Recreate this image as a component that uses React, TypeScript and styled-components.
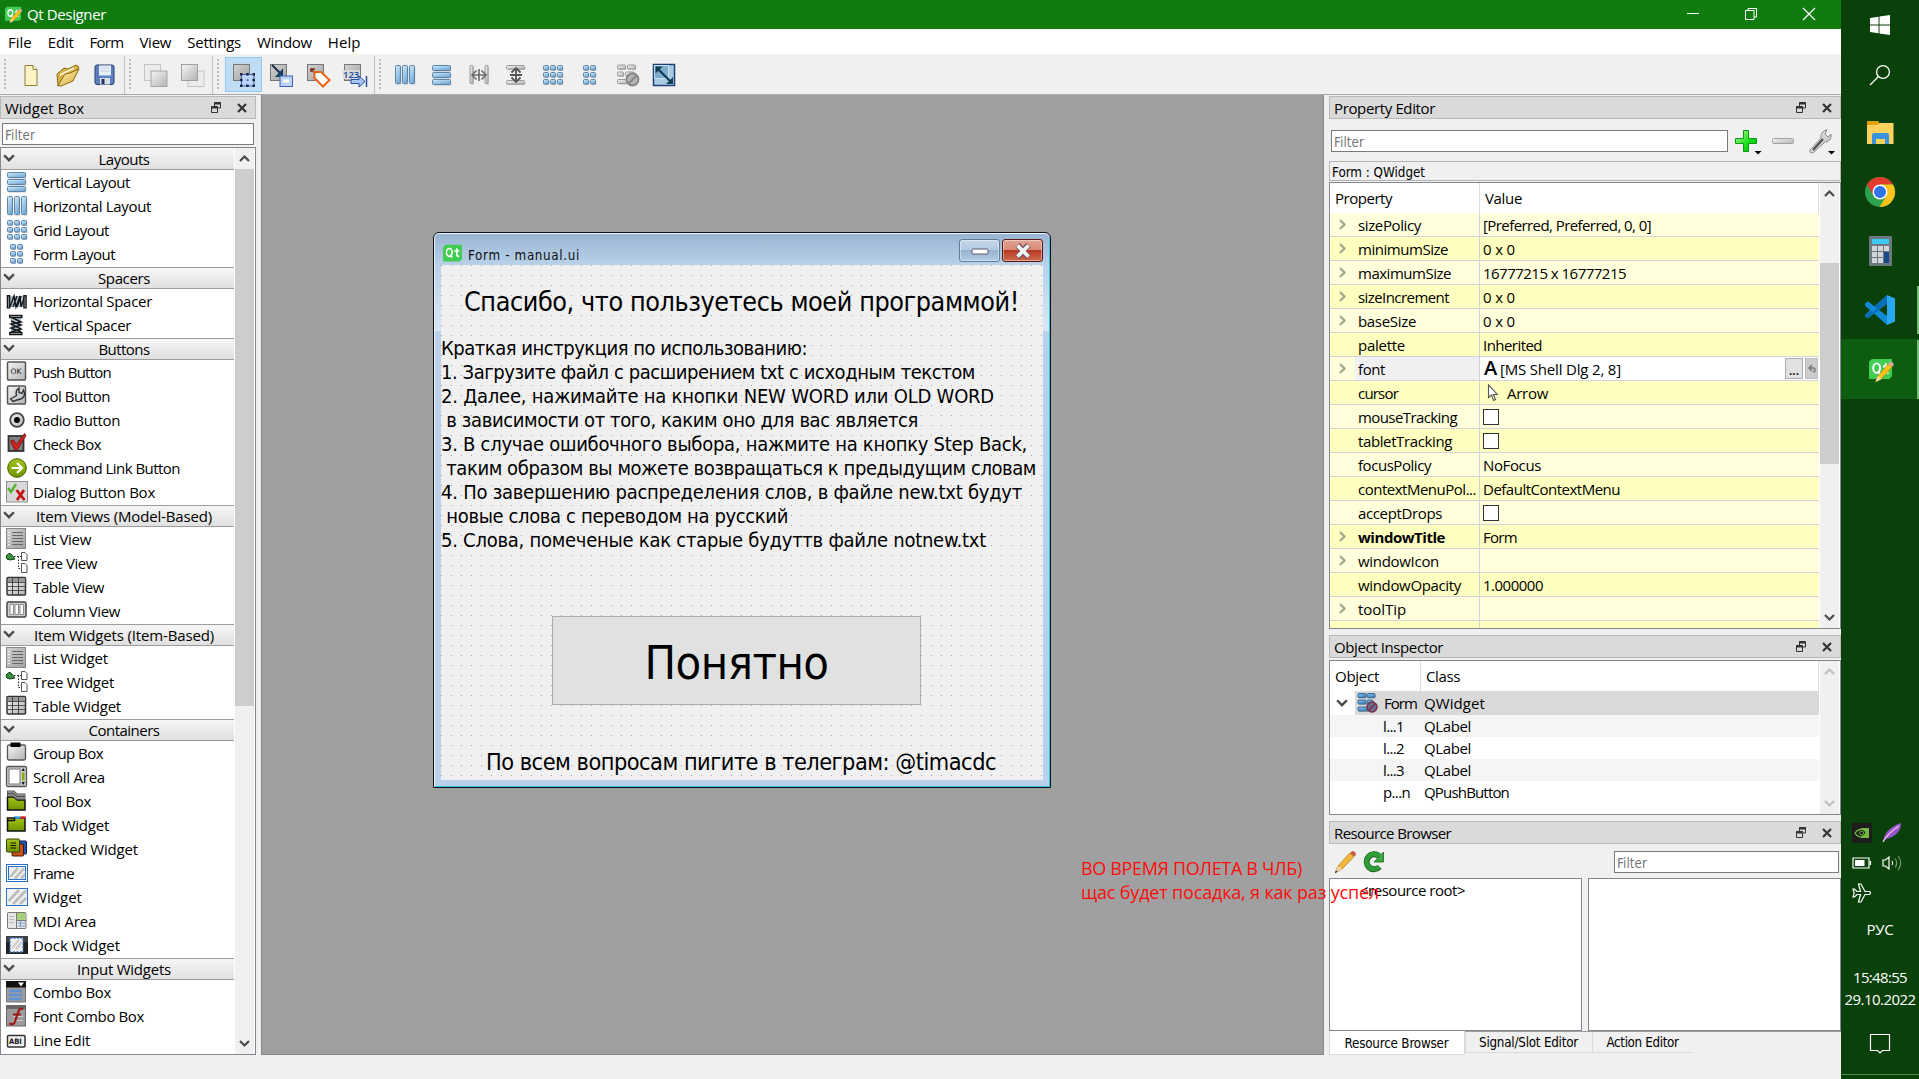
import React, { useLayoutEffect, useRef, useState } from 'react';
import styled, { createGlobalStyle, css } from 'styled-components';

const UI = `"Open Sans", "Noto Sans", sans-serif`;
const TAHOMA = `"DejaVu Sans Condensed", "DejaVu Sans", sans-serif`;

const Global = createGlobalStyle`
  * { box-sizing: border-box; }
  body { margin: 0; background: #f0f0f0; overflow: hidden; }
  svg { display: block; flex: none; overflow: visible; }
`;

/* ---------- text that keeps a given advance width ---------- */
const FitSpan = styled.span`
  display: inline-block;
  white-space: pre;
  flex: none;
`;

function Fit({ w, children }: { w: number; children: string }) {
  const ref = useRef<HTMLSpanElement>(null);
  const [spacing, setSpacing] = useState(0);
  useLayoutEffect(() => {
    if (ref.current) {
      const natural = ref.current.getBoundingClientRect().width;
      setSpacing((w - natural) / Math.max(1, children.length));
    }
  }, [w, children]);
  return <FitSpan ref={ref} style={{ letterSpacing: `${spacing}px` }}>{children}</FitSpan>;
}

/* ---------- shell ---------- */
const Screen = styled.div`
  display: flex;
  width: 1919px;
  height: 1079px;
  font: 15px/20px ${UI};
  color: #000;
  background: #f0f0f0;
`;
const AppWindow = styled.div`
  display: flex;
  flex-direction: column;
  width: 1841px;
`;
const TitleBar = styled.div`
  display: flex;
  align-items: center;
  height: 29px;
  padding: 0 0 1px 5px;
  gap: 6px;
  color: #fff;
  background: #107c10;
`;
const Spacer = styled.div`flex: 1;`;
const WinControls = styled.div`
  display: flex;
  gap: 46px;
  padding-right: 26px;
`;
const MenuBar = styled.div`
  display: flex;
  height: 27px;
  gap: 16px;
  padding: 3px 0 0 8px;
  background: #fff;
  border-bottom: 2px solid #f3f3f3;
`;
const Toolbar = styled.div`
  display: flex;
  height: 39px;
  border-bottom: 1px solid #a9a9ab;
  background: #f0f0f0;
`;
const ToolHandle = styled.div<{ $w: number; $dot: number; $line?: number }>`
  width: ${p => p.$w}px;
  height: 38px;
  background:
    linear-gradient(#c2c2c2, #c2c2c2) ${p => p.$line ?? -5}px 0 / 1px 38px no-repeat,
    repeating-linear-gradient(#bcbcbc 0 2px, transparent 2px 4px) ${p => p.$dot}px 3px / 2px 31px no-repeat;
`;
const ToolButton = styled.div<{ $on?: boolean }>`
  display: flex;
  align-items: center;
  justify-content: center;
  width: 37px;
  height: 35px;
  margin-top: 1px;
  ${p => p.$on && css`background: #c0dcf3; border: 1px solid #90c8f6;`}
`;
const Body = styled.div`
  display: flex;
  height: 960px;
`;
const LeftDock = styled.div`
  display: flex;
  flex-direction: column;
  width: 256px;
  padding-top: 1px;
  margin-right: 5px;
`;
const RightDock = styled.div`
  display: flex;
  flex-direction: column;
  width: 512px;
  padding-top: 1px;
  margin-left: 5px;
`;
const DockTitle = styled.div<{ $mt?: number }>`
  display: flex;
  align-items: center;
  height: 23px;
  flex: none;
  margin-top: ${p => p.$mt ?? 0}px;
  padding: 0 8px 0 4px;
  gap: 16px;
  background: #dadada;
  border: 1px solid #b9b9b9;
`;
const DockName = styled.div`padding-top: 1px;`;
const FilterWrap = styled.div`padding: 4px 0 0 2px;`;
const Input = styled.div<{ $w: number }>`
  display: flex;
  align-items: center;
  width: ${p => p.$w}px;
  height: 22px;
  padding: 3px 0 0 2px;
  font: 13.3px/16px ${TAHOMA};
  color: #777;
  background: #fff;
  border: 1px solid #7a7a7a;
`;
const ListFrame = styled.div`
  display: flex;
  height: 908px;
  margin-top: 2px;
  background: #fff;
  border: 1px solid #828790;
`;
const ListColumn = styled.div`
  width: 234px;
  padding-right: 1px;
`;
const Category = styled.div`
  display: flex;
  align-items: center;
  height: 22px;
  margin-bottom: 1px;
  padding: 0 0 2px 2px;
  background: linear-gradient(#f6f6f6, #e0e0e0);
  border: solid #9c9c9c;
  border-width: 1px 0;
  &:first-child { border-top-color: #f6f6f6; }
`;
const CategoryName = styled.div`
  display: flex;
  flex: 1;
  justify-content: center;
  padding: 2px 1px 0 0;
`;
const WidgetRow = styled.div`
  display: flex;
  align-items: center;
  height: 24px;
  padding: 0 0 2px 4px;
  gap: 5px;
`;
const ScrollTrack = styled.div`
  display: flex;
  flex-direction: column;
  align-items: center;
  width: 19px;
  background: #f0f0f0;
`;
const ScrollCap = styled.div<{ $h: number }>`
  display: flex;
  align-items: center;
  height: ${p => p.$h}px;
`;
const Thumb = styled.div<{ $mt?: number; $h: number }>`
  width: 100%;
  height: ${p => p.$h}px;
  margin-top: ${p => p.$mt ?? 0}px;
  background: #cdcdcd;
`;
const Canvas = styled.div`
  position: relative;
  width: 1063px;
  background: #a0a0a0;
  border: 1px solid #828790;
  border-top: 0;
`;

/* ---------- designed form ---------- */
const FormWindow = styled.div`
  position: absolute;
  left: 171px;
  top: 137px;
  width: 618px;
  height: 556px;
  display: flex;
  flex-direction: column;
  padding: 0 6px 7px;
  border: 1px solid #111;
  border-radius: 6px 6px 0 0;
  box-shadow: inset 0 1px #eef4fb, inset 1px 0 #e6eff9, inset -1px -1px #2cc6e6;
  background:
    linear-gradient(#99b4d1, #b9d1ea) 0 0 / 100% 32px no-repeat,
    linear-gradient(#b9d1ea, #d9e6f5) 0 32px / 100% 66px no-repeat,
    #b9d1ea;
`;
const FormTitle = styled.div`
  display: flex;
  height: 32px;
  flex: none;
  padding: 6px 1px 0 3px;
  font: 13.3px/16px ${TAHOMA};
  color: #111;
`;
const FormIcon = styled.div`padding-top: 5px;`;
const FormCaption = styled.div`padding: 9px 0 0 6px;`;
const CaptionButton = styled.div<{ $close?: boolean }>`
  display: flex;
  align-items: center;
  justify-content: center;
  width: 41px;
  height: 23px;
  margin-left: 2px;
  border-radius: 3px;
  border: 1px solid ${p => (p.$close ? '#5a1a17' : '#5f7c9b')};
  box-shadow: inset 0 0 0 1px rgba(255, 255, 255, .4);
  background: ${p => p.$close
    ? 'linear-gradient(#e3a193, #d98a78 48%, #b93a20 50%, #cd6b50)'
    : 'linear-gradient(#c3d5e8, #b4cae1 48%, #97b2cf 50%, #b3cce6)'};
`;
const FormBody = styled.div`
  display: flex;
  flex-direction: column;
  width: 602px;
  height: 516px;
  margin-left: 1px;
  font-family: ${TAHOMA};
  background: radial-gradient(circle at .5px .5px, #a3a3a3 .6px, transparent .7px) 0 0 / 10px 10px, #f0f0f0;
`;
const Heading = styled.div`
  padding: 21px 0 0 23px;
  font-size: 26.7px;
  line-height: 32px;
`;
const Manual = styled.div`
  padding-top: 18px;
  font-size: 20px;
  line-height: 24px;
`;
const ManualLine = styled.div`height: 24px;`;
const PushButton = styled.div`
  display: flex;
  align-items: center;
  justify-content: center;
  width: 369px;
  height: 89px;
  margin: 64px 0 0 111px;
  padding-top: 4px;
  font-size: 46.7px;
  line-height: 56px;
  background: #e1e1e1;
  border: 1px solid #adadad;
`;
const Footer = styled.div`
  padding: 43px 0 0 45px;
  font-size: 23.3px;
  line-height: 28px;
`;
const Note = styled.div`
  position: absolute;
  left: 819px;
  top: 761px;
  z-index: 2;
  font: 18px/24px ${UI};
  color: #ff0c0c;
`;

/* ---------- right docks ---------- */
const FilterBar = styled.div`
  display: flex;
  align-items: flex-start;
  height: 42px;
  padding: 11px 0 0 2px;
`;
const ToolIcon = styled.div<{ $ml: number }>`margin-left: ${p => p.$ml}px;`;
const ObjectName = styled.div`
  height: 20px;
  padding: 2px 0 0 2px;
  font: 13.3px/17px ${TAHOMA};
  border: 1px solid #b5b5b5;
`;
const Frame = styled.div<{ $h: number; $mt: number }>`
  display: flex;
  flex: none;
  height: ${p => p.$h}px;
  margin-top: ${p => p.$mt}px;
  background: #fff;
  border: 1px solid #828790;
`;
const Tree = styled.div`
  width: 490px;
  overflow: hidden;
`;
const TreeHead = styled.div<{ $first: number }>`
  display: grid;
  grid-template-columns: ${p => p.$first}px 1fr;
  height: 30px;
  margin-right: 1px;
  border-right: 1px solid #e0e0e0;
`;
const HeadCell = styled.div`
  padding: 5px 5px 0;
  & + & { border-left: 1px solid #dedede; }
`;
const PropRow = styled.div<{ $dark: boolean }>`
  display: grid;
  grid-template-columns: 25px 124px 1fr;
  height: 24px;
  margin-right: 1px;
  background: ${p => (p.$dark ? '#ffffbf' : '#ffffdc')};
`;
const PropCell = styled.div<{ $kind?: 'name' | 'value'; $bg?: string; $bold?: boolean }>`
  display: flex;
  align-items: center;
  padding-left: ${p => (p.$kind ? 3 : 7)}px;
  padding-top: ${p => (p.$kind ? 1 : 0)}px;
  border-bottom: 1px solid #d3d3dc;
  ${p => p.$kind === 'value' && css`border-left: 1px solid #d3d3dc;`}
  ${p => p.$bg && css`background: ${p.$bg};`}
  ${p => p.$bold && css`font-weight: 700;`}
`;
const CheckBox = styled.div`
  width: 16px;
  height: 16px;
  background: #fff;
  border: 1px solid #333;
`;
const MiniButton = styled.div<{ $w: number; $dim?: boolean }>`
  display: flex;
  align-items: center;
  justify-content: center;
  width: ${p => p.$w}px;
  height: 21px;
  margin: -1px 1px 0;
  padding-top: ${p => (p.$dim ? 0 : 4)}px;
  font: 600 12px/12px ${UI};
  border: 1px solid ${p => (p.$dim ? '#bdbdbd' : '#adadad')};
  background: ${p => (p.$dim ? '#cccccc' : '#e1e1e1')};
`;
const FontValue = styled.div`
  display: flex;
  align-items: center;
  gap: 3px;
`;
const BigA = styled.span`
  font: 600 20px/20px ${UI};
  margin-left: 1px;
  padding-bottom: 2px;
  width: 13px;
`;
const ObjRow = styled.div<{ $bg: string; $h: number }>`
  display: grid;
  grid-template-columns: 25px 66px 1fr;
  align-items: center;
  height: ${p => p.$h}px;
  margin-right: 1px;
  background: linear-gradient(${p => p.$bg}, ${p => p.$bg}) ${p => (p.$h === 24 ? 25 : 0)}px 0 no-repeat;
`;
const ObjName = styled.div<{ $pl: number }>`
  display: flex;
  align-items: center;
  gap: 6px;
  padding-left: ${p => p.$pl}px;
`;
const ObjClass = styled.div`padding-left: 3px;`;
const ResourceBar = styled.div`
  display: flex;
  height: 34px;
  padding: 7px 2px 0 5px;
  gap: 7px;
`;
const ResourcePanes = styled.div`
  display: grid;
  grid-template-columns: 253px 253px;
  gap: 6px;
  height: 153px;
`;
const Pane = styled.div`
  padding: 1px 0 0 30px;
  background: #fff;
  border: 1px solid #828790;
`;
const Tabs = styled.div`
  display: flex;
  align-items: flex-start;
  height: 24px;
  font: 13.3px/16px ${TAHOMA};
  border-top: 1px solid #a0a0a4;
`;
const Tab = styled.div<{ $w: number; $active?: boolean }>`
  display: flex;
  justify-content: center;
  width: ${p => p.$w}px;
  height: ${p => (p.$active ? 24 : 21)}px;
  padding-top: ${p => (p.$active ? 5 : 3)}px;
  padding-right: 1px;
  margin-top: ${p => (p.$active ? -1 : 0)}px;
  background: ${p => (p.$active ? '#fff' : '#f0f0f0')};
  border: solid #d9d9d9;
  border-width: 0 ${p => (p.$active ? 1 : 0)}px 1px 1px;
`;

/* ---------- taskbar ---------- */
const Taskbar = styled.div`
  display: flex;
  flex-direction: column;
  align-items: center;
  width: 78px;
  height: 1079px;
  color: #fff;
  background: #0a410a;
`;
const Slot = styled.div<{ $h: number; $active?: boolean; $open?: boolean; $mt?: number }>`
  display: flex;
  align-items: center;
  justify-content: center;
  width: 78px;
  height: ${p => p.$h}px;
  margin-top: ${p => p.$mt ?? 0}px;
  flex: none;
  background:
    linear-gradient(#76b876, #76b876) right center / ${p => (p.$open ? 2 : 0)}px ${p => (p.$active ? 59 : 48)}px no-repeat,
    ${p => (p.$active ? '#0d5c10' : 'transparent')};
`;
const Tray = styled.div`
  display: grid;
  grid-template-columns: 20px 20px;
  grid-auto-rows: 20px;
  gap: 10px;
  align-items: center;
  justify-items: center;
  width: 56px;
  margin-top: 424px;
`;
const TrayText = styled.div<{ $mt: number }>`
  margin-top: ${p => p.$mt}px;
  line-height: 20px;
`;
const TaskEnd = styled.div`
  width: 78px;
  height: 5px;
  margin-top: auto;
  border-top: 1px solid #4f8a4f;
`;

/* ---------- drawings ---------- */
const Chevron = ({ d, c = '#4a4a4a', s = 11 }: { d: 'up' | 'down' | 'right'; c?: string; s?: number }) => (
  <svg width={s} height={s} viewBox="0 0 11 11" fill="none" stroke={c} strokeWidth="2.2">
    <path d={d === 'up' ? 'M1 8 L5.5 3.5 L10 8' : d === 'down' ? 'M1 3 L5.5 7.5 L10 3' : 'M3 1 L7.5 5.5 L3 10'} />
  </svg>
);
const FloatIcon = () => (
  <svg width="10" height="11" viewBox="0 0 10 11" fill="none" stroke="#333" strokeWidth="1">
    <path d="M3.5 4V.5h6v5.5H7" /><path d="M3 1.5h7M0 5.5h7" strokeWidth="2" /><path d="M.5 4.5h6v6h-6z" />
  </svg>
);
const CloseIcon = () => (
  <svg width="10" height="10" viewBox="0 0 10 10" stroke="#333" strokeWidth="2.2"><path d="M1 1l8 8M9 1l-8 8" /></svg>
);
const QtIcon = ({ s = 16, pencil = false }: { s?: number; pencil?: boolean }) => (
  <svg width={s} height={s} viewBox="0 0 24 24">
    <path d="M3 1h21v18l-3 3H0V4z" fill="#41cd52" />
    <g fill="none" stroke="#fff" strokeWidth="2"><ellipse cx="8" cy="10.6" rx="3.6" ry="5" /><path d="M9 13.5l2.5 3.6M17.5 5.5v8q0 2.4 3 2M14.5 8.8h6" /></g>
    {pencil && <g><path d="M7 25l2-6L20 6l4 3.5L13 22z" fill="#f6c21c" stroke="#b07b10" strokeWidth=".6" /><path d="M20 6l2-2q3-.5 4 3l-2 2.5z" fill="#dda7a0" /><path d="M7 25l2-6 4 3z" fill="#f2dcb5" /></g>}
  </svg>
);

const I = ({ children, w = 24, h = 24 }: { children: React.ReactNode; w?: number; h?: number }) => (
  <svg width={w} height={h} viewBox={`0 0 ${w} ${h}`}>{children}</svg>
);
const DefsSvg = styled.svg`position: absolute;`;
const Gradients = () => (
  <DefsSvg width="0" height="0">
    <defs>
      <linearGradient id="blue" x2=".6" y2="1"><stop stopColor="#d2edfb" /><stop offset="1" stopColor="#74abd8" /></linearGradient>
      <linearGradient id="deep" x2=".6" y2="1"><stop stopColor="#8ac6ee" /><stop offset="1" stopColor="#3f83bd" /></linearGradient>
      <linearGradient id="gray" x2="1" y2="1"><stop stopColor="#f4f4f4" /><stop offset="1" stopColor="#b4b4b4" /></linearGradient>
      <linearGradient id="mid" x2="1" y2="1"><stop stopColor="#d2d2d2" /><stop offset="1" stopColor="#a2a2a2" /></linearGradient>
      <linearGradient id="green" x2="0" y2="1"><stop stopColor="#a3c414" /><stop offset="1" stopColor="#6f9400" /></linearGradient>
      <linearGradient id="gold" x2="1" y2="1"><stop stopColor="#fdf3c0" /><stop offset="1" stopColor="#d9a92e" /></linearGradient>
      <linearGradient id="plus" x2="1" y2="1"><stop stopColor="#b6f7a0" /><stop offset=".6" stopColor="#14dd14" /><stop offset="1" stopColor="#0bb00b" /></linearGradient>
    </defs>
  </DefsSvg>
);
type Cell = [number, number, number, number];
const tones = {
  blue: ['url(#blue)', '#5f84aa'],
  deep: ['url(#deep)', '#3a6a94'],
  gray: ['url(#gray)', '#9a9a9a'],
} as const;
const Cellset = ({ cells, tone = 'blue' }: { cells: Cell[]; tone?: keyof typeof tones }) => (
  <g>
    {cells.map(([x, y, w, h], i) => <rect key={`s${i}`} x={x + .7} y={y + .9} width={w} height={h} rx="1" fill="#8d949c" opacity=".55" />)}
    <g fill={tones[tone][0]} stroke={tones[tone][1]} strokeWidth="1">
      {cells.map(([x, y, w, h], i) => <rect key={i} x={x} y={y} width={w} height={h} rx="1" />)}
    </g>
  </g>
);
const vCells: Cell[] = [[2.5, 2.5, 18, 5], [2.5, 9.5, 18, 5], [2.5, 16.5, 18, 5]];
const hCells: Cell[] = [[2.5, 2.5, 5, 18], [9.5, 2.5, 5, 18], [16.5, 2.5, 5, 18]];
const gCells: Cell[] = [0, 1, 2].flatMap(r => [0, 1, 2].map(c => [2.5 + c * 7, 2.5 + r * 7, 5, 4.5] as Cell));
const fCells: Cell[] = [0, 1, 2].flatMap(r => [0, 1].map(c => [5.5 + c * 7, 2.5 + r * 7, 5, 4.5] as Cell));
const SheetBack = () => <rect x="1.5" y="1.5" width="16" height="16" fill="url(#mid)" stroke="#777" />;
const brokenCells: Cell[] = [[2.5, 2, 8, 4], [12.5, 2, 8, 4], [2.5, 9, 6, 4], [10.5, 9, 9, 4], [2.5, 16.5, 9, 4]];
const formCells: Cell[] = [[2, 1.5, 8, 4], [11, 1.5, 8, 4], [2, 8, 8, 4], [11, 8, 6, 4], [2, 15, 11, 4]];
const handles: [number, number][] = [[8, 10], [14.2, 10], [20.5, 10], [8, 15.8], [20.5, 15.8], [8, 21.5], [14.2, 21.5], [20.5, 21.5]];

const toolIcons: Record<string, React.ReactNode> = {
  new: <><path d="M6 2.5h8l4 4v16H6z" fill="#fcf4c4" stroke="#8f7d33" /><path d="M14 2.5v4h4" fill="#fffbe6" stroke="#8f7d33" /></>,
  open: <><path d="M1 11L8 5l4 1 8-4 3 2-7 13-14 6z" fill="#d9b145" stroke="#8a6a17" /><path d="M2 22.5L9 11l5-1 9-4-6 12-12 5z" fill="url(#gold)" stroke="#8a6a17" /><path d="M4 12l14-7" stroke="#fff8dc" strokeWidth="1.5" /></>,
  save: <><rect x="2" y="2" width="19" height="19.5" rx="2" fill="#5c7fc0" stroke="#26406f" /><rect x="6" y="2.5" width="12" height="10" fill="#e9eff8" /><path d="M7 8h10M7 5h10" stroke="#c3cfe2" /><rect x="7" y="15" width="10" height="6.5" fill="#dadfe8" /><rect x="8.5" y="16" width="3" height="5" fill="#23355a" /></>,
  back: <><rect x="1.5" y="1.5" width="16" height="16" fill="#ececec" stroke="#c4c4c4" /><rect x="8" y="8" width="16" height="15.5" fill="url(#gray)" stroke="#a6a6a6" /></>,
  front: <><rect x="8" y="8" width="16" height="15.5" fill="#ececec" stroke="#c4c4c4" /><rect x="1.5" y="1.5" width="16" height="16" fill="url(#gray)" stroke="#a0a0a0" /></>,
  edit: <><SheetBack /><rect x="9.5" y="11.5" width="12.5" height="11.5" fill="#bcd4f8" stroke="#3d64b8" /><g fill="#1c2640">{handles.map(([x, y]) => <rect key={`${x}-${y}`} x={x} y={y} width="2.5" height="2.5" />)}</g><rect x="14.8" y="16.2" width="1.8" height="1.8" fill="#3d64b8" /></>,
  signal: <><SheetBack /><path d="M3 2l9 9" stroke="#163050" strokeWidth="2" /><path d="M14 5.5V14H6z" fill="#163f63" /><rect x="11" y="13" width="12.5" height="10.5" fill="#bdd3f6" stroke="#3d64b8" /><path d="M14 18h6" stroke="#fff" strokeWidth="3" /></>,
  buddy: <><SheetBack /><path d="M5 6l7 7M5 9V6h4" stroke="#7c2713" fill="none" strokeWidth="1.5" /><path d="M8.5 9h6.5l8.500 8-6.500 6.500-8.500-8.500z" fill="#fff" stroke="#ea6517" strokeWidth="2" /></>,
  taborder: <><SheetBack /><rect x="0" y="7" width="17" height="9" fill="#d8d8d8" /><path d="M8 16.5h8V13l6 5.5-6 5.5v-3.500H8z" fill="#a8c4f0" stroke="#244f9c" /><path d="M23.5 13v11" stroke="#244f9c" strokeWidth="1.5" /></>,
  hbox: <Cellset cells={hCells} />,
  vbox: <Cellset cells={vCells} />,
  hsplit: <><Cellset tone="gray" cells={[[3, 2.5, 3, 18], [18, 2.5, 3, 18]]} /><path d="M5 12h14M9.5 7.5L5 12l4.5 4.5M14.5 7.5L19 12l-4.5 4.5M12 6v12" fill="none" stroke="#6f6f6f" strokeWidth="1.7" /></>,
  vsplit: <><Cellset tone="gray" cells={[[2.5, 2.5, 18, 3.5], [2.5, 17.5, 18, 3.5]]} /><path d="M12 5v14M7.5 9.5L12 5l4.5 4.5M7.5 14.5L12 19l4.5-4.5M6 12h12" fill="none" stroke="#555" strokeWidth="1.8" /></>,
  grid: <Cellset cells={gCells} />,
  form: <Cellset cells={fCells} />,
  broken: <><Cellset tone="gray" cells={brokenCells} /><circle cx="17.5" cy="16.5" r="6" fill="#b5b5b5" stroke="#858585" strokeWidth="1.8" /><path d="M14 20l7-7" stroke="#858585" strokeWidth="2" /></>,
  adjust: <><rect x="1.5" y="1.5" width="21" height="21" fill="#a9cbe2" stroke="#1e3f7c" strokeWidth="1.5" /><rect x="2.5" y="2.5" width="14" height="13" fill="#7eaccb" stroke="#c9dfee" /><path d="M6 6l13 13" stroke="#0f3c55" strokeWidth="2.2" /><path d="M3.5 3.5h7l-7 7zM21 21h-7l7-7z" fill="#0f3c55" /></>,
};
const ToolGlyph = ({ name }: { name: string }) => (
  <I>
    {toolIcons[name]}
    {name === 'taborder' && <text x="0" y="15" fontFamily="Open Sans" fontSize="9.5" fontWeight="600" fill="#164a9c">123</text>}
  </I>
);

const lines = (y: number[], x1: number, x2: number, c: string) => <g stroke={c}>{y.map(v => <path key={v} d={`M${x1} ${v}H${x2}`} />)}</g>;
const listIcon = <><rect x="1.5" y="1.5" width="19" height="20" fill="url(#mid)" stroke="#888" />{lines([5.5, 8.5, 11.5, 14.5, 17.5], 7, 18, '#666')}{lines([5.5, 8.5, 11.5, 14.5, 17.5], 3, 5, '#eee')}</>;
const treeIcon = <><path d="M1 5q3-4 5-2l4 5-5 1q-4 0-4-4z" fill="#39933d" stroke="#123f15" /><path d="M9 5.5h7M13.5 5.5v12h4" stroke="#222" strokeDasharray="1.5 1.5" fill="none" /><path d="M16.5 1.5H20l2 2v6h-5.5zM16.5 12.5H20l2 2v7h-5.5z" fill="#fff" stroke="#555" /></>;
const tableIcon = <><rect x="2" y="2.5" width="18.5" height="17.5" rx="1" fill="url(#gray)" stroke="#333" strokeWidth="1.5" /><rect x="3" y="3" width="16.5" height="4" fill="#999" />{lines([7.5, 11.5, 15.5], 2, 20, '#555')}<path d="M7.5 3v17M13.5 3v17" stroke="#444" /></>;
const greenBox = { fill: 'url(#green)', stroke: '#111', strokeWidth: 1.5 };

const widgetIcons: Record<string, React.ReactNode> = {
  'Vertical Layout': <Cellset cells={vCells} />,
  'Horizontal Layout': <Cellset cells={hCells} />,
  'Grid Layout': <Cellset cells={gCells} />,
  'Form Layout': <Cellset cells={fCells} />,
  'Horizontal Spacer': <><path d="M5 7h14v11H5z" fill="#a9c2d2" /><path d="M5 18L9 7l2 11 4-11 1 11 4-11M8 18l4-11M12 18l4-11" stroke="#161616" strokeWidth="1.4" fill="none" /><path d="M3.5 6v13.5M20 6v13.5" stroke="#1a1a1a" strokeWidth="3.6" /><path d="M3.5 7.5v11M20 7.500v11" stroke="#8b8b8b" /></>,
  'Vertical Spacer': <><path d="M6 5h10v14H6z" fill="#a9c2d2" /><path d="M6 4l10 5-10 2 10 5-10 3M6 8l10 4-10 3 10 4" stroke="#161616" strokeWidth="1.5" fill="none" /><path d="M4 3.5h13.5M4 20.5h13.5" stroke="#1a1a1a" strokeWidth="3.6" /><path d="M5.5 3.5H16M5.5 20.5H16" stroke="#8b8b8b" /></>,
  'Push Button': <rect x="2.5" y="2" width="18" height="18" rx="1" fill="url(#gray)" stroke="#555" strokeWidth="1.5" />,
  'Tool Button': <><rect x="2.5" y="2" width="18" height="18" rx="1" fill="url(#gray)" stroke="#555" strokeWidth="1.5" /><path d="M5.5 15l6-3.5q-1.5-5 2.5-7.500V8.500l3 1 1.500-3.500q3 6-2.500 9l-4 1-4 1.500z" fill="#c4ccd4" stroke="#333" strokeWidth="1.4" /></>,
  'Radio Button': <><circle cx="12" cy="12" r="6.8" fill="url(#gray)" stroke="#444" strokeWidth="1.8" /><circle cx="12" cy="12" r="3" fill="#050505" /></>,
  'Check Box': <><rect x="3.5" y="4" width="15" height="15" fill="#7e7e7e" stroke="#333" strokeWidth="1.8" /><path d="M5.5 9l3-1 3 4.5 8-11 1.500 2-9 14.500h-2z" fill="#d61f1f" stroke="#761010" strokeWidth=".9" /></>,
  'Command Link Button': <><circle cx="12" cy="12" r="9.3" fill="url(#green)" stroke="#3f5c06" /><path d="M6.5 12h10M12 7l5 5-5 5" stroke="#fff" fill="none" strokeWidth="2.2" /></>,
  'Dialog Button Box': <><rect x="1.5" y="1.5" width="21" height="20.5" fill="#d9d9d9" stroke="#8e8e8e" /><path d="M3 8l3 4 5-8" stroke="#54b42a" strokeWidth="2.4" fill="none" /><path d="M11.5 10l8 10M19 10l-7 10" stroke="#c41414" strokeWidth="2.8" /></>,
  'List View': listIcon, 'List Widget': listIcon,
  'Tree View': treeIcon, 'Tree Widget': treeIcon,
  'Table View': tableIcon, 'Table Widget': tableIcon,
  'Column View': <><rect x="2" y="3" width="19" height="15" rx="1.5" fill="#cfcfcf" stroke="#444" strokeWidth="1.5" /><path d="M5 5.5h3.5v10H5zM10 5.5h3.5v10H10zM15 5.5h3.5v10H15z" fill="#fff" stroke="#777" strokeWidth=".8" /></>,
  'Group Box': <><rect x="2.5" y="4" width="18" height="15" rx="1.5" fill="url(#gray)" stroke="#555" strokeWidth="1.3" /><rect x="5.5" y="1.5" width="10" height="4.5" fill="#050505" /></>,
  'Scroll Area': <><rect x="1.5" y="1.5" width="20" height="20" rx="1.5" fill="#cbcbcb" stroke="#555" strokeWidth="1.3" /><rect x="4" y="4" width="11" height="15" fill="#fff" stroke="#777" /><rect x="17" y="7.5" width="2.5" height="8" fill="#84b000" /><path d="M16.5 6l1.700-3 1.700 3zM16.500 17l1.700 3 1.700-3z" fill="#111" /></>,
  'Tool Box': <><path d="M2.5 8h6l4 3H20v10H2.5z" {...greenBox} /><path d="M2 3h6.5l3 3h9M2 6h6.500l3 3h9" fill="none" stroke="#555" strokeWidth="3" /><path d="M3 3h5.5l3 3H20M3 6h5.5l3 3H20" fill="none" stroke="#bbb" /></>,
  'Tab Widget': <><rect x="2.5" y="5" width="17.5" height="13" {...greenBox} /><path d="M9 4.5h6" stroke="#35a4ea" strokeWidth="2.5" /><path d="M15.5 4.5h5" stroke="#d41f2c" strokeWidth="2.5" /><path d="M2.5 7.5h7v-3" stroke="#111" fill="none" strokeWidth="1.5" /></>,
  'Stacked Widget': <><rect x="11" y="4" width="10.5" height="13" rx="1" fill="#1d55b4" stroke="#0c1c44" /><rect x="7" y="7" width="11.5" height="12" rx="1" fill="#c9501a" stroke="#401505" /><rect x="1.5" y="2" width="13" height="13" rx="1" fill="url(#green)" stroke="#33430a" />{lines([6, 8.5, 11], 5.5, 11, '#111')}</>,
  Frame: <><rect x="1.5" y="3.5" width="21" height="17" fill="#fff" stroke="#2b70c4" /><rect x="3.5" y="5.5" width="17" height="13" fill="#eee" stroke="#2b70c4" /><path d="M5 16l8-9M10 17.5l9-10M16 17.5l4-4" stroke="#bcbcbc" strokeWidth="2.6" /></>,
  Widget: <><rect x="1.5" y="3.5" width="21" height="17" fill="#f0f0f0" stroke="#2b70c4" /><path d="M3.5 16L14 5M8 19L21 5.5M15 19l6-6" stroke="#bdbdbd" strokeWidth="2.8" /></>,
  'MDI Area': <><rect x="2.5" y="3.5" width="18.5" height="16" rx="1" fill="#e6e6e6" stroke="#777" /><rect x="12" y="4" width="8.5" height="7" fill="#a7cf7a" /><path d="M11.5 4v15M12 11.5h9" stroke="#777" />{lines([7.5, 10.5, 13.5], 4, 9, '#bbb')}<path d="M13 14h7M13 17h7M15.5 12v6" stroke="#7c9fd0" /></>,
  'Dock Widget': <><rect x="1" y="3" width="22" height="18" fill="#222" /><rect x="1" y="3" width="22" height="6" fill="#555" opacity=".6" /><rect x="5" y="5" width="13" height="14" fill="#eee" stroke="#3a77c4" strokeDasharray="2 1.5" strokeWidth="1.3" /><path d="M7 15l7-8M11 16l6-7" stroke="#ccc" strokeWidth="2" /></>,
  'Combo Box': <><rect x="1.5" y="1.5" width="19" height="20.5" fill="#9c9c9c" stroke="#777" /><rect x="1" y="1" width="20" height="6.5" fill="#111" /><path d="M13 2.5h6L16 6.5z" fill="#fff" /><path d="M4 11h13M4 15h13M4 19h13" stroke="#5e93d6" strokeWidth="2.5" /></>,
  'Font Combo Box': <><rect x="1.5" y="1.5" width="19" height="20.5" fill="#9b9b9b" stroke="#666" /><rect x="1" y="1" width="20" height="4" fill="#666" />{lines([12.5, 16.5], 8, 18, '#ccc')}<path d="M18 5.5q-3-3-5 3l-3 9q-1 4-6 2M8 10.5h8" stroke="#a01616" strokeWidth="2.2" fill="none" /></>,
  'Line Edit': <rect x="2.5" y="7.5" width="17.5" height="11.5" rx="1" fill="#f2f2f2" stroke="#333" strokeWidth="1.5" />,
};
const WidgetGlyph = ({ name }: { name: string }) => (
  <I w={23}>
    {widgetIcons[name]}
    {name === 'Push Button' && <text x="5.5" y="13.5" fontFamily="DejaVu Sans" fontSize="7.5" fill="#111">OK</text>}
    {name === 'Line Edit' && <text x="4" y="16" fontFamily="DejaVu Sans Condensed" fontSize="7.5" fontWeight="700" fill="#111">ABI</text>}
  </I>
);

/* ---------- data ---------- */
const menus: [string, number][] = [['File', 24], ['Edit', 26], ['Form', 34], ['View', 32], ['Settings', 54], ['Window', 55], ['Help', 33]];
const categories: { name: string; w: number; items: [string, number][] }[] = [
  { name: 'Layouts', w: 51, items: [['Vertical Layout', 97], ['Horizontal Layout', 118], ['Grid Layout', 76], ['Form Layout', 82]] },
  { name: 'Spacers', w: 52, items: [['Horizontal Spacer', 119], ['Vertical Spacer', 98]] },
  { name: 'Buttons', w: 51, items: [['Push Button', 78], ['Tool Button', 77], ['Radio Button', 87], ['Check Box', 68], ['Command Link Button', 147], ['Dialog Button Box', 122]] },
  { name: 'Item Views (Model-Based)', w: 176, items: [['List View', 58], ['Tree View', 64], ['Table View', 71], ['Column View', 87]] },
  { name: 'Item Widgets (Item-Based)', w: 180, items: [['List Widget', 75], ['Tree Widget', 81], ['Table Widget', 88]] },
  { name: 'Containers', w: 71, items: [['Group Box', 70], ['Scroll Area', 72], ['Tool Box', 58], ['Tab Widget', 76], ['Stacked Widget', 105], ['Frame', 41], ['Widget', 49], ['MDI Area', 63], ['Dock Widget', 87]] },
  { name: 'Input Widgets', w: 94, items: [['Combo Box', 78], ['Font Combo Box', 111], ['Line Edit', 57]] },
];
type Prop = { n: string; w: number; v?: string; vw?: number; arrow?: boolean; kind?: 'check' | 'font' | 'cursor'; bold?: boolean };
const props: Prop[] = [
  { n: 'sizePolicy', w: 63, v: '[Preferred, Preferred, 0, 0]', vw: 168, arrow: true },
  { n: 'minimumSize', w: 90, v: '0 x 0', vw: 32, arrow: true },
  { n: 'maximumSize', w: 93, v: '16777215 x 16777215', vw: 143, arrow: true },
  { n: 'sizeIncrement', w: 91, v: '0 x 0', vw: 32, arrow: true },
  { n: 'baseSize', w: 58, v: '0 x 0', vw: 32, arrow: true },
  { n: 'palette', w: 47, v: 'Inherited', vw: 59 },
  { n: 'font', w: 27, v: '[MS Shell Dlg 2, 8]', vw: 121, arrow: true, kind: 'font' },
  { n: 'cursor', w: 40, v: 'Arrow', vw: 41, kind: 'cursor' },
  { n: 'mouseTracking', w: 99, kind: 'check' },
  { n: 'tabletTracking', w: 94, kind: 'check' },
  { n: 'focusPolicy', w: 73, v: 'NoFocus', vw: 58 },
  { n: 'contextMenuPol...', w: 118, v: 'DefaultContextMenu', vw: 137 },
  { n: 'acceptDrops', w: 84, kind: 'check' },
  { n: 'windowTitle', w: 87, v: 'Form', vw: 34, arrow: true, bold: true },
  { n: 'windowIcon', w: 81, arrow: true },
  { n: 'windowOpacity', w: 103, v: '1.000000', vw: 60 },
  { n: 'toolTip', w: 48, arrow: true },
  { n: '', w: 0 },
];
const manual: [string, number][] = [
  ['Краткая инструкция по использованию:', 366],
  ['1. Загрузите файл с расширением txt с исходным текстом', 534],
  ['2. Далее, нажимайте на кнопки NEW WORD или OLD WORD', 553],
  [' в зависимости от того, каким оно для вас является', 477],
  ['3. В случае ошибочного выбора, нажмите на кнопку Step Back,', 586],
  [' таким образом вы можете возвращаться к предыдущим словам', 595],
  ['4. По завершению распределения слов, в файле new.txt будут', 581],
  [' новые слова с переводом на русский', 347],
  ['5. Слова, помеченые как старые будуттв файле notnew.txt', 545],
];
const objects = [['l...1', 21, 'QLabel', 47], ['l...2', 21, 'QLabel', 47], ['l...3', 21, 'QLabel', 47], ['p...n', 27, 'QPushButton', 85]] as const;

const PropValue = ({ p }: { p: Prop }) => {
  if (p.kind === 'check') return <CheckBox />;
  if (p.kind === 'font') {
    return (
      <>
        <FontValue><BigA>A</BigA><Fit w={p.vw!}>{p.v!}</Fit></FontValue>
        <Spacer />
        <MiniButton $w={18}>...</MiniButton>
        <MiniButton $w={13} $dim>
          <svg width="8" height="9" viewBox="0 0 8 9" fill="none" stroke="#777" strokeWidth="1.5"><path d="M1 4h4q2 0 2 2t-2 2M4 1L1 4l3 3" /></svg>
        </MiniButton>
      </>
    );
  }
  if (p.kind === 'cursor') {
    return (
      <FontValue>
        <svg width="21" height="18" viewBox="0 0 21 18"><path d="M5.5 1v12.5l3-2.5 2 5.5 2-1-2.2-5h4z" fill="#fff" stroke="#555" strokeWidth="1.1" /></svg>
        <Fit w={p.vw!}>{p.v!}</Fit>
      </FontValue>
    );
  }
  return p.v ? <Fit w={p.vw!}>{p.v}</Fit> : null;
};

const Dock = ({ title, w, mt }: { title: string; w: number; mt?: number }) => (
  <DockTitle $mt={mt}><DockName><Fit w={w}>{title}</Fit></DockName><Spacer /><FloatIcon /><CloseIcon /></DockTitle>
);

export default function App() {
  return (
    <Screen>
      <Global />
      <Gradients />
      <AppWindow>
        <TitleBar>
          <QtIcon s={16} pencil />
          <Fit w={79}>Qt Designer</Fit>
          <Spacer />
          <WinControls>
            <svg width="12" height="12" viewBox="0 0 12 12" stroke="#fff"><path d="M0 5.5h12" /></svg>
            <svg width="12" height="12" viewBox="0 0 12 12" stroke="#fff" fill="none"><path d="M.5 2.5H9v9H.5zM3 2.500V.5h8.500V9H9" /></svg>
            <svg width="12" height="12" viewBox="0 0 12 12" stroke="#fff" strokeWidth="1.2"><path d="M0 0l12 12M12 0L0 12" /></svg>
          </WinControls>
        </TitleBar>
        <MenuBar>{menus.map(([m, w]) => <Fit key={m} w={w - .2}>{m}</Fit>)}</MenuBar>
        <Toolbar>
          <ToolHandle $w={12} $dot={4} />
          {['new', 'open', 'save'].map(n => <ToolButton key={n}><ToolGlyph name={n} /></ToolButton>)}
          <ToolHandle $w={13} $line={1} $dot={6} />
          {['back', 'front'].map(n => <ToolButton key={n}><ToolGlyph name={n} /></ToolButton>)}
          <ToolHandle $w={15} $line={2} $dot={7} />
          {['edit', 'signal', 'buddy', 'taborder'].map(n => <ToolButton key={n} $on={n === 'edit'}><ToolGlyph name={n} /></ToolButton>)}
          <ToolHandle $w={13} $line={1} $dot={6} />
          {['hbox', 'vbox', 'hsplit', 'vsplit', 'grid', 'form', 'broken', 'adjust'].map(n => <ToolButton key={n}><ToolGlyph name={n} /></ToolButton>)}
        </Toolbar>

        <Body>
          <LeftDock>
            <Dock title="Widget Box" w={79} />
            <FilterWrap><Input $w={252}><Fit w={30}>Filter</Fit></Input></FilterWrap>
            <ListFrame>
              <ListColumn>
                {categories.map(c => (
                  <React.Fragment key={c.name}>
                    <Category><Chevron d="down" s={12} /><CategoryName><Fit w={c.w}>{c.name}</Fit></CategoryName></Category>
                    {c.items.map(([n, w]) => <WidgetRow key={n}><WidgetGlyph name={n} /><Fit w={w}>{n}</Fit></WidgetRow>)}
                  </React.Fragment>
                ))}
              </ListColumn>
              <ScrollTrack>
                <ScrollCap $h={21}><Chevron d="up" /></ScrollCap>
                <Thumb $h={537} />
                <Spacer />
                <ScrollCap $h={21}><Chevron d="down" /></ScrollCap>
              </ScrollTrack>
            </ListFrame>
          </LeftDock>

          <Canvas>
            <FormWindow>
              <FormTitle>
                <FormIcon><QtIcon s={19} /></FormIcon>
                <FormCaption><Fit w={112}>Form - manual.ui</Fit></FormCaption>
                <Spacer />
                <CaptionButton>
                  <svg width="18" height="8" viewBox="0 0 18 8"><rect x="1" y="2" width="16" height="5" rx="1" fill="#fff" stroke="#555b66" /></svg>
                </CaptionButton>
                <CaptionButton $close>
                  <svg width="16" height="14" viewBox="0 0 16 14"><path d="M2.5 1l11 12M13.5 1l-11 12" stroke="#6b5560" strokeWidth="5.8" /><path d="M2.5 1.5l11 11M13.5 1.500l-11 11" stroke="#f4f4f4" strokeWidth="3.8" /></svg>
                </CaptionButton>
              </FormTitle>
              <FormBody>
                <Heading><Fit w={555}>Спасибо, что пользуетесь моей программой!</Fit></Heading>
                <Manual>{manual.map(([t, w]) => <ManualLine key={t}><Fit w={w}>{t}</Fit></ManualLine>)}</Manual>
                <PushButton><Fit w={184}>Понятно</Fit></PushButton>
                <Footer><Fit w={510}>По всем вопросам пигите в телеграм: @timacdc</Fit></Footer>
              </FormBody>
            </FormWindow>
            <Note>
              <div><Fit w={221}>ВО ВРЕМЯ ПОЛЕТА В ЧЛБ)</Fit></div>
              <div><Fit w={298}>щас будет посадка, я как раз успел</Fit></div>
            </Note>
          </Canvas>

          <RightDock>
            <Dock title="Property Editor" w={101} />
            <FilterBar>
              <Input $w={397}><Fit w={30}>Filter</Fit></Input>
              <ToolIcon $ml={7}>
                <svg width="28" height="25" viewBox="0 0 28 25"><path d="M8.5.5h5v8h8v5h-8v8h-5v-8h-8v-5h8z" fill="url(#plus)" stroke="#0c9a10" /><path d="M19.5 21h7L23 24.5z" fill="#000" /></svg>
              </ToolIcon>
              <ToolIcon $ml={9}>
                <svg width="23" height="22" viewBox="0 0 23 22"><rect x=".5" y="8.5" width="21" height="5" rx="1" fill="url(#gray)" stroke="#a2a2a2" /></svg>
              </ToolIcon>
              <ToolIcon $ml={14}>
                <svg width="28" height="25" viewBox="0 0 28 25"><path d="M1 20L12 8q-1-6 6-8.500l-2 4.500 3 3 3-3q1 7-6 8L4 23q-4 0-3-3z" fill="url(#gray)" stroke="#8b8b8b" /><path d="M4 20L14 9" stroke="#4a4a4a" strokeWidth="2" /><path d="M19 21h7l-3.500 3.500z" fill="#000" /></svg>
              </ToolIcon>
            </FilterBar>
            <ObjectName><Fit w={93}>Form : QWidget</Fit></ObjectName>
            <Frame $h={447} $mt={1}>
              <Tree>
                <TreeHead $first={149}><HeadCell><Fit w={57}>Property</Fit></HeadCell><HeadCell><Fit w={37}>Value</Fit></HeadCell></TreeHead>
                {props.map((p, i) => (
                  <PropRow key={i} $dark={i % 2 === 1}>
                    <PropCell>{p.arrow && <Chevron d="right" c="#a3a391" />}</PropCell>
                    <PropCell $kind="name" $bold={p.bold} $bg={p.kind === 'font' ? '#f0f0f0' : undefined}><Fit w={p.w}>{p.n}</Fit></PropCell>
                    <PropCell $kind="value" $bg={p.kind === 'font' ? '#fff' : undefined}><PropValue p={p} /></PropCell>
                  </PropRow>
                ))}
              </Tree>
              <ScrollTrack>
                <ScrollCap $h={21}><Chevron d="up" /></ScrollCap>
                <Thumb $mt={59} $h={201} />
                <Spacer />
                <ScrollCap $h={21}><Chevron d="down" /></ScrollCap>
              </ScrollTrack>
            </Frame>

            <Dock title="Object Inspector" w={109} mt={6} />
            <Frame $h={155} $mt={2}>
              <Tree>
                <TreeHead $first={90}><HeadCell><Fit w={44}>Object</Fit></HeadCell><HeadCell><Fit w={34}>Class</Fit></HeadCell></TreeHead>
                <ObjRow $bg="#d9d9d9" $h={24}>
                  <ObjName $pl={6}><Chevron d="down" s={12} /></ObjName>
                  <ObjName $pl={1}>
                    <I w={22} h={22}><Cellset tone="deep" cells={formCells} /><circle cx="16" cy="15" r="5" fill="#6c6c93" stroke="#7a3345" strokeWidth="1.6" /><path d="M13 18l6-6" stroke="#7a3345" strokeWidth="1.6" /></I>
                    <Fit w={33}>Form</Fit>
                  </ObjName>
                  <ObjClass><Fit w={61}>QWidget</Fit></ObjClass>
                </ObjRow>
                {objects.map(([n, w, c, cw], i) => (
                  <ObjRow key={n} $bg={i % 2 ? '#ffffff' : '#f5f5f5'} $h={22}>
                    <span /><ObjName $pl={28}><Fit w={w}>{n}</Fit></ObjName><ObjClass><Fit w={cw}>{c}</Fit></ObjClass>
                  </ObjRow>
                ))}
              </Tree>
              <ScrollTrack>
                <ScrollCap $h={21}><Chevron d="up" c="#bfbfbf" /></ScrollCap>
                <Spacer />
                <ScrollCap $h={21}><Chevron d="down" c="#bfbfbf" /></ScrollCap>
              </ScrollTrack>
            </Frame>

            <Dock title="Resource Browser" w={117} mt={6} />
            <ResourceBar>
              <svg width="22" height="22" viewBox="0 0 22 22"><path d="M1 22l3-7L16 2l4 3.5L8 18z" fill="#f3b93a" stroke="#b27a1c" strokeWidth=".8" /><path d="M16 2l2-2q4 0 4 4l-2 1.5z" fill="#c9603e" /><path d="M1 22l3-7 4 3z" fill="#efd6a8" /><path d="M1 22l1-2.5 1.5 1.3z" fill="#222" /></svg>
              <svg width="21" height="21" viewBox="0 0 21 21"><path d="M16.5 16A7.5 7.5 0 1 1 16 5" fill="none" stroke="#17641a" strokeWidth="6" /><path d="M16.5 15.7A7.5 7.5 0 1 1 16 5" fill="none" stroke="#2f9c37" strokeWidth="4.5" /><path d="M20.5 1v10H11z" fill="#3dab43" stroke="#17641a" strokeWidth=".8" /></svg>
              <Spacer />
              <Input $w={225}><Fit w={30}>Filter</Fit></Input>
            </ResourceBar>
            <ResourcePanes><Pane><Fit w={105}>{'<resource root>'}</Fit></Pane><Pane /></ResourcePanes>
            <Tabs>
              <Tab $w={136} $active><Fit w={104}>Resource Browser</Fit></Tab>
              <Tab $w={127}><Fit w={99}>Signal/Slot Editor</Fit></Tab>
              <Tab $w={101}><Fit w={72}>Action Editor</Fit></Tab>
            </Tabs>
          </RightDock>
        </Body>
      </AppWindow>

      <Taskbar>
        <Slot $h={50}><svg width="20" height="20" viewBox="0 0 20 20"><path d="M0 3l8.5-1.2V9.5H0zM9.5 1.6L20 0v9.5H9.5zM0 10.5h8.5v7.7L0 17zM9.5 10.5H20V20L9.5 18.4z" fill="#fff" /></svg></Slot>
        <Slot $h={50}><svg width="20" height="20" viewBox="0 0 20 20" fill="none" stroke="#fff" strokeWidth="1.3"><circle cx="13" cy="7" r="6.4" /><path d="M0 20l8.5-8.5" /></svg></Slot>
        <Slot $h={59} $mt={3}><svg width="28" height="24" viewBox="0 0 28 24"><path d="M1 0h11l2 3H27v8H1z" fill="#e2a005" /><path d="M1 4h10l3-2h13.5v21H1z" fill="#fdd25e" /><path d="M6 23V14q0-2 2-2h13q2 0 2 2v9h-4v-5h-9v5z" fill="#3b93dd" /></svg></Slot>
        <Slot $h={59}>
          <svg width="30" height="30" viewBox="0 0 30 30"><circle cx="15" cy="15" r="15" fill="#2ba24c" /><path d="M2 7.5A15 15 0 0 1 28 7.5H15L8.5 18.7z" fill="#e33b2e" /><path d="M28 7.5A15 15 0 0 1 14.5 30l7-11.2L15 7.5z" fill="#fcc31e" /><circle cx="15" cy="15" r="7.5" fill="#fff" /><circle cx="15" cy="15" r="6" fill="#2f74e8" /></svg>
        </Slot>
        <Slot $h={59}>
          <svg width="23" height="30" viewBox="0 0 23 30"><rect width="23" height="30" rx="1" fill="#6e7881" /><rect x="3" y="3" width="17" height="5" fill="#3cc8f0" />{[0, 1, 2].flatMap(r => [0, 1, 2].map(c => <rect key={`${r}${c}`} x={3 + c * 6} y={10 + r * 6} width="5" height="5" fill={c === 2 && r > 0 ? '#164a86' : '#cfd6dc'} />))}<rect x="15" y="16" width="5" height="11" fill="#164a86" /></svg>
        </Slot>
        <Slot $h={59} $open>
          <svg width="30" height="30" viewBox="0 0 30 30"><path d="M22 30L0 10.5v-2L3 6.5 22 21z" fill="#1289d6" /><path d="M22 0L0 19.5v2L3 23.5 22 9z" fill="#0a6fb5" /><path d="M0 10.5v-2l3-2 9 7-4 4z" fill="#1289d6" /><path d="M22 0l8 3.5v23L22 30z" fill="#2aa9f2" /></svg>
        </Slot>
        <Slot $h={60} $active $open><QtIcon s={23} pencil /></Slot>
        <Tray>
          <svg width="20" height="20" viewBox="0 0 20 20"><rect width="20" height="20" fill="#1d1d1d" /><path d="M9 5h8v10H9z" fill="#76b843" /><path d="M3 10q4-5 8-3.5 3 1.5 3 3.5-3 4-6 4-3-.5-5-4z" fill="#1d1d1d" stroke="#76b843" strokeWidth="1.2" /><circle cx="9.5" cy="10" r="2" fill="none" stroke="#76b843" /></svg>
          <svg width="20" height="20" viewBox="0 0 20 20"><path d="M1 19Q2 6 19 0q0 12-15 16z" fill="#9a55c9" /><path d="M1 19Q6 10 17 3" stroke="#e3c4f4" fill="none" strokeWidth="1.3" /></svg>
          <svg width="20" height="12" viewBox="0 0 20 12"><path d="M1 1h16v10H1zM18.5 4v4" fill="none" stroke="#fff" strokeWidth="1.2" /><rect x="3" y="3" width="9.500" height="6" fill="#fff" /></svg>
          <svg width="20" height="18" viewBox="0 0 20 18" fill="none" stroke="#fff" strokeWidth="1.2"><path d="M1 6h2.5L7 3v12l-3.500-3H1z" /><path d="M10 7q1.5 2 0 4" /><path d="M13 4.500q3.500 4.500 0 9M16 2q5.500 7 0 14" stroke="#6f9a6f" /></svg>
          <svg width="20" height="20" viewBox="0 0 20 20" fill="none" stroke="#fff" strokeWidth="1.2"><path d="M1 6h1.500L5 8.500h3.500L6.500 1H9l4 7.500h4.500q2 1.500 0 3H13L9 19H6.500l2-7.500H5L2.500 14H1l1.200-4z" /></svg>
        </Tray>
        <TrayText $mt={16}><Fit w={27}>РУС</Fit></TrayText>
        <TrayText $mt={28}><Fit w={54}>15:48:55</Fit></TrayText>
        <TrayText $mt={2}><Fit w={71}>29.10.2022</Fit></TrayText>
        <Slot $h={24} $mt={23}><svg width="20" height="21" viewBox="0 0 20 21" fill="none" stroke="#fff" strokeWidth="1.2"><path d="M.5.5h19v16h-7L10 19l-2.5-2.5h-7z" /></svg></Slot>
        <TaskEnd />
      </Taskbar>
    </Screen>
  );
}
